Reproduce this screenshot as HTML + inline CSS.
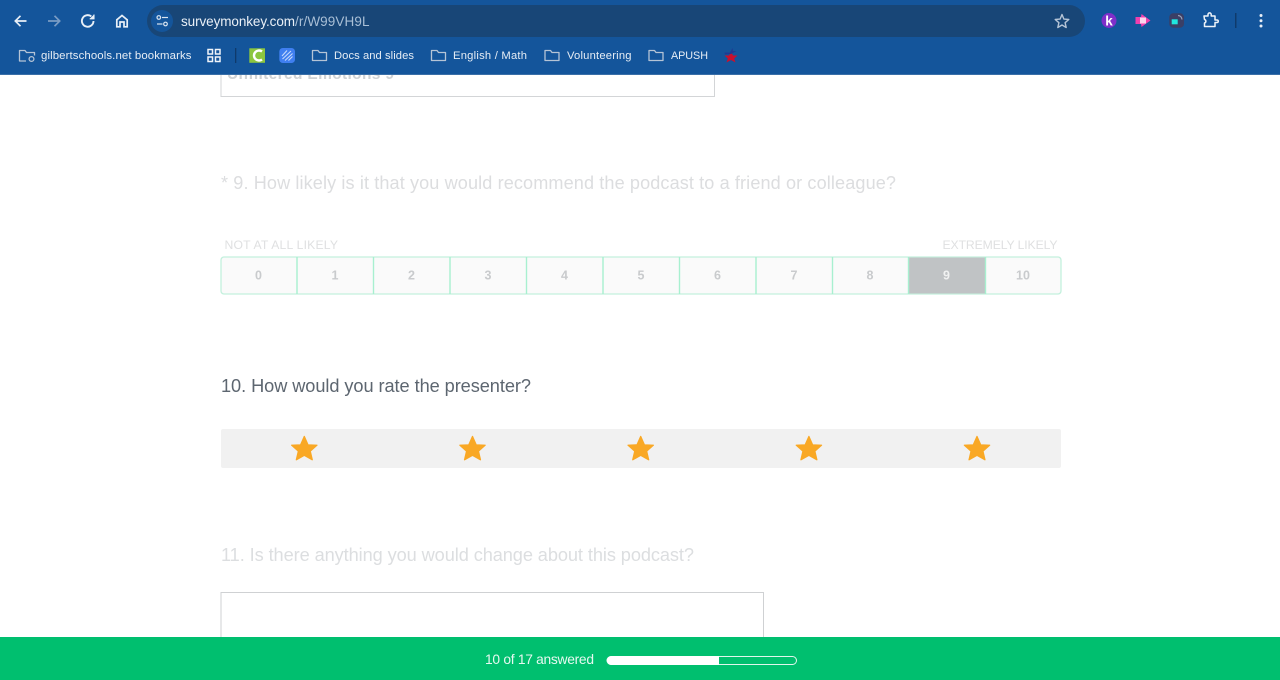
<!DOCTYPE html>
<html><head><meta charset="utf-8"><title>Survey</title>
<style>
html,body{margin:0;padding:0;background:#fff;width:1280px;height:680px;overflow:hidden}
svg{display:block}
text{font-family:"Liberation Sans",sans-serif}
</style></head><body>
<svg width="1280" height="680" viewBox="0 0 1280 680" xmlns="http://www.w3.org/2000/svg">
<rect width="1280" height="680" fill="#fff"/>

<!-- previous question input -->
<text x="227" y="79" font-size="15.500" font-weight="700" fill="#cfd2d5" textLength="167" lengthAdjust="spacing">Unfiltered Emotions 9</text>
<rect x="221" y="60" width="493.500" height="36.500" fill="none" stroke="#d3d5d7" stroke-width="1"/>

<!-- Q9 -->
<text x="221" y="189" font-size="18.100" fill="#dcdddf" textLength="675" lengthAdjust="spacing">* 9. How likely is it that you would recommend the podcast to a friend or colleague?</text>
<text x="224.500" y="249" font-size="12.200" fill="#dfe0e1" textLength="113.500" lengthAdjust="spacing">NOT AT ALL LIKELY</text>
<text x="1057.500" y="249" font-size="12.200" fill="#dfe0e1" text-anchor="end" textLength="115" lengthAdjust="spacing">EXTREMELY LIKELY</text>

<rect x="221" y="257" width="840" height="37" rx="3" fill="#fafafa" stroke="#c3f0dd" stroke-width="1.300"/>
<rect x="908.500" y="257.500" width="77" height="36" fill="#c0c3c5"/>
<g stroke="#a8f0d0" stroke-width="1.400">
<path d="M297 257V294M373.500 257V294M450 257V294M526.500 257V294M603 257V294M679.500 257V294M756 257V294M832.500 257V294M908.500 257V294M985.500 257V294"/>
</g>
<g font-size="12.500" font-weight="700" fill="#c9cbcd" text-anchor="middle">
<text x="258.500" y="279.500">0</text>
<text x="335" y="279.500">1</text>
<text x="411.500" y="279.500">2</text>
<text x="488" y="279.500">3</text>
<text x="564.500" y="279.500">4</text>
<text x="641" y="279.500">5</text>
<text x="717.500" y="279.500">6</text>
<text x="794" y="279.500">7</text>
<text x="870" y="279.500">8</text>
<text x="946.500" y="279.500" fill="#f1f2f2">9</text>
<text x="1023" y="279.500">10</text>
</g>

<!-- Q10 -->
<text x="221" y="392" font-size="18.200" fill="#5d6670" textLength="310" lengthAdjust="spacing">10. How would you rate the presenter?</text>
<rect x="221" y="429" width="840" height="39" rx="2" fill="#f1f1f1"/>
<defs><path id="s" d="M0 -12.600L3.700 -4.200L12.700 -3.800L6 2.200L8 10.800L0 6.300L-8 10.800L-6 2.200L-12.700 -3.800L-3.700 -4.200Z"/></defs>
<g fill="#f9a825" stroke="#f9a825" stroke-width="1.200" stroke-linejoin="round">
<use href="#s" x="304.300" y="449"/>
<use href="#s" x="472.500" y="449"/>
<use href="#s" x="640.700" y="449"/>
<use href="#s" x="808.900" y="449"/>
<use href="#s" x="977" y="449"/>
</g>

<!-- Q11 -->
<text x="221" y="561" font-size="18.200" fill="#dcdee0" textLength="473" lengthAdjust="spacing">11. Is there anything you would change about this podcast?</text>
<rect x="221" y="592.500" width="542.500" height="60" fill="#fff" stroke="#cfd1d3" stroke-width="1"/>

<!-- bottom bar -->
<rect x="0" y="637" width="1280" height="43" fill="#00bf6f"/>
<text x="485" y="664" font-size="13.800" fill="#e6f8f0" textLength="109" lengthAdjust="spacing">10 of 17 answered</text>
<rect x="607.500" y="656.500" width="189" height="8" rx="4" fill="none" stroke="#e0f6ec" stroke-width="1"/>
<path d="M611 656H719V665H611A4.500 4.500 0 0 1 611 656Z" fill="#fff"/>

<!-- browser chrome -->
<rect x="0" y="0" width="1280" height="74" fill="#14559b"/>
<rect x="0" y="74" width="1280" height="1" fill="#3a6fa8"/>
<rect x="147" y="5" width="938" height="32" rx="16" fill="#184677"/>
<circle cx="162" cy="21" r="11" fill="#14559b"/>

<!-- nav icons -->
<g fill="none" stroke="#e8eff7" stroke-width="1.700">
<path d="M26.500 21H15.500M20.500 15.800L15.300 21L20.500 26.200"/>
<path d="M48 21H59.500M54.500 15.800L59.700 21L54.500 26.200" stroke="#7a9cc4"/>
<path d="M93.500 21A5.800 5.800 0 1 1 91.300 16.400" stroke-width="1.900"/>
<path d="M94 14.500V18.800H89.700" fill="#e8eff7" stroke-width="1.100"/>
<path d="M116.800 26.800V19.800L122 15.500L127.200 19.800V26.800H124V22H120V26.800Z"/>
</g>
<g fill="none" stroke="#d9e4f0" stroke-width="1.200">
<circle cx="158.800" cy="17.500" r="1.800"/><path d="M162 17.500H168"/>
<circle cx="165.500" cy="24" r="1.800"/><path d="M157 24H162.500"/>
</g>
<text x="181" y="26" font-size="13.500" fill="#eaf0f7" textLength="114" lengthAdjust="spacing">surveymonkey.com</text>
<text x="295" y="26" font-size="13.500" fill="#a9bfd6" textLength="74.500" lengthAdjust="spacing">/r/W99VH9L</text>
<path d="M1062 14.500L1063.900 19.100L1068.800 19.500L1065.100 22.700L1066.200 27.500L1062 25L1057.800 27.500L1058.900 22.700L1055.200 19.500L1060.100 19.100Z" fill="none" stroke="#b5c4d6" stroke-width="1.400" stroke-linejoin="round"/>

<!-- extensions -->
<circle cx="1109" cy="20.500" r="7.500" fill="#7f2fc9"/>
<text x="1109" y="25.500" font-size="13.500" font-weight="700" fill="#fff" text-anchor="middle">k</text>
<path d="M1135.500 17H1141L1141.500 14L1150.500 20.500L1141.500 27L1141 24H1135.500Z" fill="#f03fae"/>
<rect x="1140" y="17.500" width="6" height="6" fill="#fbd5ee"/>
<rect x="1169.300" y="13.300" width="14.700" height="14.400" rx="4" fill="#3a3f66"/>
<rect x="1171.700" y="19.300" width="6" height="5" fill="#20e6e0"/>
<path d="M1178 15.500A4 4 0 0 1 1182 19.500" stroke="#9aa0b8" fill="none" stroke-width="1.200"/>
<path d="M1205 16H1209V14.500A1.600 1.600 0 0 1 1212.200 14.500V16H1216V20H1218A1.200 1.200 0 0 1 1218 22.500H1216V26.500H1205.500V23A1.800 1.800 0 0 0 1205.500 19.500Z" transform="translate(-1 0)" fill="none" stroke="#eef3f9" stroke-width="1.500" stroke-linejoin="round"/>
<rect x="1235" y="13" width="1.500" height="15" fill="#0f3a6b"/>
<circle cx="1261" cy="15.500" r="1.500" fill="#e8eff7"/><circle cx="1261" cy="20.700" r="1.500" fill="#e8eff7"/><circle cx="1261" cy="26" r="1.500" fill="#e8eff7"/>

<!-- bookmarks bar -->
<g fill="none" stroke="#b5c4d6" stroke-width="1.300" stroke-linejoin="round">
<path d="M26 61H19.500V50.500H25L26.500 52.500H34.500V55.500"/>
<circle cx="31.500" cy="59" r="2.400"/>
</g>
<text x="41" y="59" font-size="11.400" fill="#e6edf5" textLength="150.500" lengthAdjust="spacing">gilbertschools.net bookmarks</text>
<g fill="none" stroke="#f0f4f9" stroke-width="1.500">
<rect x="208" y="49.500" width="4.500" height="4.500"/><rect x="215.500" y="49.500" width="4.500" height="4.500"/>
<rect x="208" y="57" width="4.500" height="4.500"/><rect x="215.500" y="57" width="4.500" height="4.500"/>
</g>
<rect x="235" y="48" width="1.300" height="15" fill="#0f3a6b"/>
<rect x="249.300" y="48.300" width="15.700" height="14.500" fill="#8cc63f"/>
<path d="M262 51.500A5 5 0 1 0 262 59.500" fill="none" stroke="#fff" stroke-width="2.400"/>
<rect x="279.300" y="48" width="15.700" height="15" rx="3.500" fill="#3f7ff0"/>
<path d="M282 56L287 50.500M282.500 59L291 51M285 60.500L292.500 53.500M288.500 60.500L292.500 56.500" stroke="#c6d9fb" stroke-width="1.100" fill="none"/>

<g fill="none" stroke="#b5c4d6" stroke-width="1.300" stroke-linejoin="round">
<path d="M312.500 60.500V50.500H318L319.500 52.500H326.500V60.500Z"/>
<path d="M431.500 60.500V50.500H437L438.500 52.500H445.500V60.500Z"/>
<path d="M545 60.500V50.500H550.500L552 52.500H559V60.500Z"/>
<path d="M649 60.500V50.500H654.500L656 52.500H663V60.500Z"/>
</g>
<g font-size="11.200" fill="#e6edf5">
<text x="334" y="59" textLength="80" lengthAdjust="spacing">Docs and slides</text>
<text x="453" y="59" textLength="74" lengthAdjust="spacing">English / Math</text>
<text x="567" y="59" textLength="64.500" lengthAdjust="spacing">Volunteering</text>
<text x="671" y="59" font-size="10.800" textLength="37" lengthAdjust="spacing">APUSH</text>
</g>
<path d="M731 51.500L733 55.500H737.500L734.200 58.500L735.500 62.500L731 60L726.500 62.500L727.800 58.500L724.500 55.500H729Z" fill="#c8102e"/>
<path d="M724.500 52.500H730L732.500 48L733 51H736.500L731 54L725 54.500Z" fill="#1f3a93"/>
</svg>
</body></html>
